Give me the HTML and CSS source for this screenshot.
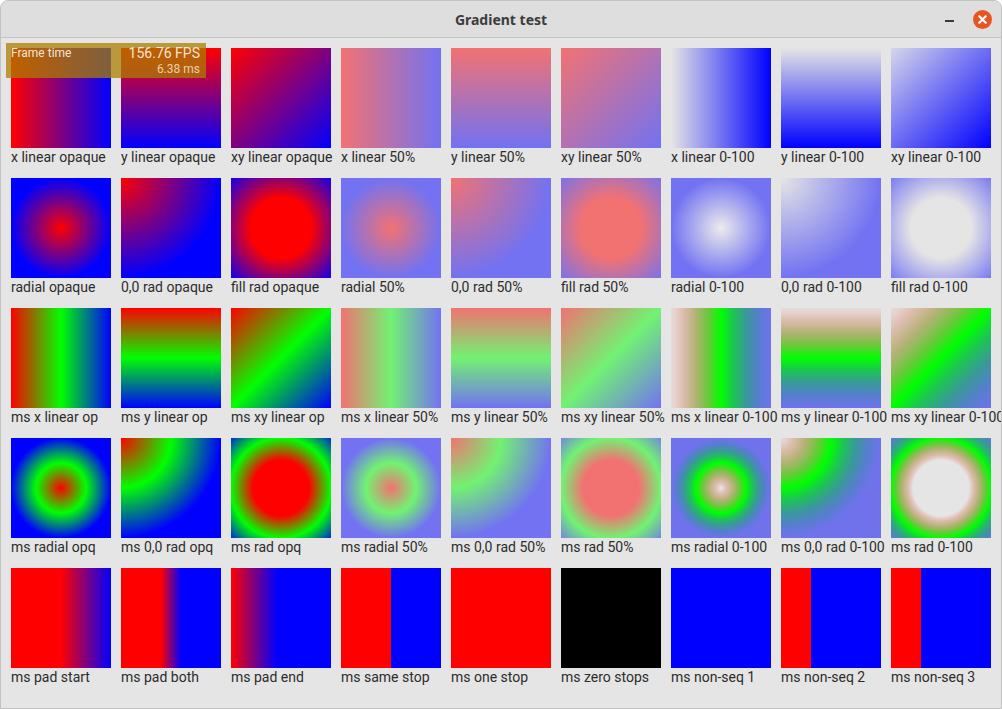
FILE: index.html
```html
<!DOCTYPE html>
<html lang="en">
  <head>
    <meta charset="UTF-8" />
    <meta name="viewport" content="width=device-width, initial-scale=1.0" />
    <title>Gradient test</title>
    <link rel="stylesheet" href="styles.css">
  </head>
  <body>
    <div class="window">
      <div class="titlebar">
        <span class="title">Gradient test</span>
        <div class="controls">
          <span class="minimize"></span>
          <span class="close">
            <svg width="19" height="19" viewBox="0 0 19 19">
              <circle cx="9.5" cy="9.5" r="9.5" fill="#e95420" />
              <path d="M6.3 6.3 L12.7 12.7 M12.7 6.3 L6.3 12.7" stroke="#fff" stroke-width="2.2" stroke-linecap="round" />
            </svg>
          </span>
        </div>
      </div>

      <div class="content">
        <div class="grid">
          <!-- row 1: linear -->
          <div class="cell"><div class="swatch xlin"></div><span class="label">x linear opaque</span></div>
          <div class="cell"><div class="swatch ylin"></div><span class="label">y linear opaque</span></div>
          <div class="cell"><div class="swatch xylin"></div><span class="label">xy linear opaque</span></div>
          <div class="cell"><div class="swatch xlin50"></div><span class="label">x linear 50%</span></div>
          <div class="cell"><div class="swatch ylin50"></div><span class="label">y linear 50%</span></div>
          <div class="cell"><div class="swatch xylin50"></div><span class="label">xy linear 50%</span></div>
          <div class="cell"><div class="swatch xlin0"></div><span class="label">x linear 0-100</span></div>
          <div class="cell"><div class="swatch ylin0"></div><span class="label">y linear 0-100</span></div>
          <div class="cell"><div class="swatch xylin0"></div><span class="label">xy linear 0-100</span></div>

          <!-- row 2: radial -->
          <div class="cell"><div class="swatch rad"></div><span class="label">radial opaque</span></div>
          <div class="cell"><div class="swatch rad00"></div><span class="label">0,0 rad opaque</span></div>
          <div class="cell"><div class="swatch radfill"></div><span class="label">fill rad opaque</span></div>
          <div class="cell"><div class="swatch rad50"></div><span class="label">radial 50%</span></div>
          <div class="cell"><div class="swatch rad0050"></div><span class="label">0,0 rad 50%</span></div>
          <div class="cell"><div class="swatch radfill50"></div><span class="label">fill rad 50%</span></div>
          <div class="cell"><div class="swatch rad0"></div><span class="label">radial 0-100</span></div>
          <div class="cell"><div class="swatch rad000"></div><span class="label">0,0 rad 0-100</span></div>
          <div class="cell"><div class="swatch radfill0"></div><span class="label">fill rad 0-100</span></div>

          <!-- row 3: multi stop linear -->
          <div class="cell"><div class="swatch msx"></div><span class="label">ms x linear op</span></div>
          <div class="cell"><div class="swatch msy"></div><span class="label">ms y linear op</span></div>
          <div class="cell"><div class="swatch msxy"></div><span class="label">ms xy linear op</span></div>
          <div class="cell"><div class="swatch msx50"></div><span class="label">ms x linear 50%</span></div>
          <div class="cell"><div class="swatch msy50"></div><span class="label">ms y linear 50%</span></div>
          <div class="cell"><div class="swatch msxy50"></div><span class="label">ms xy linear 50%</span></div>
          <div class="cell"><div class="swatch msx0"></div><span class="label">ms x linear 0-100</span></div>
          <div class="cell"><div class="swatch msy0"></div><span class="label">ms y linear 0-100</span></div>
          <div class="cell"><div class="swatch msxy0"></div><span class="label">ms xy linear 0-100</span></div>

          <!-- row 4: multi stop radial -->
          <div class="cell"><div class="swatch msrad"></div><span class="label">ms radial opq</span></div>
          <div class="cell"><div class="swatch msrad00"></div><span class="label">ms 0,0 rad opq</span></div>
          <div class="cell"><div class="swatch msradfill"></div><span class="label">ms rad opq</span></div>
          <div class="cell"><div class="swatch msrad50"></div><span class="label">ms radial 50%</span></div>
          <div class="cell"><div class="swatch msrad0050"></div><span class="label">ms 0,0 rad 50%</span></div>
          <div class="cell"><div class="swatch msradfill50"></div><span class="label">ms rad 50%</span></div>
          <div class="cell"><div class="swatch msrad0"></div><span class="label">ms radial 0-100</span></div>
          <div class="cell"><div class="swatch msrad000"></div><span class="label">ms 0,0 rad 0-100</span></div>
          <div class="cell"><div class="swatch msradfill0"></div><span class="label">ms rad 0-100</span></div>

          <!-- row 5: stop edge cases -->
          <div class="cell"><div class="swatch padstart"></div><span class="label">ms pad start</span></div>
          <div class="cell"><div class="swatch padboth"></div><span class="label">ms pad both</span></div>
          <div class="cell"><div class="swatch padend"></div><span class="label">ms pad end</span></div>
          <div class="cell"><div class="swatch samestop"></div><span class="label">ms same stop</span></div>
          <div class="cell"><div class="swatch onestop"></div><span class="label">ms one stop</span></div>
          <div class="cell"><div class="swatch zerostops"></div><span class="label">ms zero stops</span></div>
          <div class="cell"><div class="swatch nonseq1"></div><span class="label">ms non-seq 1</span></div>
          <div class="cell"><div class="swatch nonseq2"></div><span class="label">ms non-seq 2</span></div>
          <div class="cell"><div class="swatch nonseq3"></div><span class="label">ms non-seq 3</span></div>
        </div>

        <div class="fps">
          <span class="fps-title">Frame time</span>
          <div class="fps-values">
            <span class="fps-rate">156.76 FPS</span>
            <span class="fps-ms">6.38 ms</span>
          </div>
        </div>
      </div>
    </div>
  </body>
</html>
```

FILE: styles.css
```css
body {
  margin: 0;
  background: #fff;
}
.window {
  width: 1002px;
  height: 709px;
  box-sizing: border-box;
  border: 1px solid #c2c2c2;
  border-radius: 8px 8px 0 0;
  background: #e5e5e5;
  overflow: hidden;
  display: flex;
  flex-direction: column;
}
.titlebar {
  height: 36px;
  flex-shrink: 0;
  background: #dedede;
  border-bottom: 1px solid #c4c4c4;
  display: flex;
  align-items: center;
  justify-content: center;
  position: relative;
}
.title {
  font-family: "Noto Sans", sans-serif;
  font-weight: bold;
  font-size: 14px;
  color: #3c3c3c;
}
.controls {
  position: absolute;
  right: 9px;
  top: 9px;
  display: flex;
  align-items: center;
  gap: 19px;
}
.minimize {
  width: 9px;
  height: 2px;
  background: #3a3a3a;
  margin-top: 3px;
}
.close {
  display: flex;
}

.content {
  position: relative;
  flex: 1;
  padding: 10px;
}
.grid {
  display: grid;
  grid-template-columns: repeat(9, 100px);
  gap: 10px;
}
.cell {
  display: flex;
  flex-direction: column;
}
.swatch {
  width: 100px;
  height: 100px;
}
.label {
  height: 20px;
  line-height: 19px;
  font-family: Roboto, "Liberation Sans", sans-serif;
  font-size: 14px;
  color: #2c2c2c;
  white-space: nowrap;
}

/* fps overlay */
.fps {
  position: absolute;
  left: 5px;
  top: 5px;
  width: 200px;
  height: 35px;
  box-sizing: border-box;
  padding: 2px 6px 0 5px;
  background: rgba(170, 127, 0, 0.75);
  display: flex;
  justify-content: space-between;
  font-family: Roboto, sans-serif;
  color: rgba(255, 255, 255, 0.85);
}
.fps-title {
  font-size: 12px;
  line-height: 16px;
}
.fps-values {
  display: flex;
  flex-direction: column;
  align-items: flex-end;
}
.fps-rate {
  font-size: 14px;
  line-height: 17px;
}
.fps-ms {
  font-size: 12px;
  line-height: 15px;
  color: rgba(255, 235, 215, 0.8);
}

/* row 1 */
.xlin { background: linear-gradient(to right, #f00, #00f); }
.ylin { background: linear-gradient(to bottom, #f00, #00f); }
.xylin { background: linear-gradient(135deg, #f00, #00f); }
.xlin50 { background: linear-gradient(to right, #f27272, #7272f2); }
.ylin50 { background: linear-gradient(to bottom, #f27272, #7272f2); }
.xylin50 { background: linear-gradient(135deg, #f27272, #7272f2); }
.xlin0 { background: linear-gradient(to right, #e5e5e5, #00f); }
.ylin0 { background: linear-gradient(to bottom, #e5e5e5, #00f); }
.xylin0 { background: linear-gradient(135deg, #d6d6ea, #00f); }

/* row 2 */
.rad { background: radial-gradient(circle closest-side, #f00, #00f); }
.rad00 { background: radial-gradient(circle 100px at 0 0, #f00, #00f); }
.radfill { background: radial-gradient(circle 74px, #f00 30px, #00f); }
.rad50 { background: radial-gradient(circle closest-side, #f27272, #7272f2); }
.rad0050 { background: radial-gradient(circle 100px at 0 0, #f27272, #7272f2); }
.radfill50 { background: radial-gradient(circle 74px, #f27272 30px, #7272f2); }
.rad0 { background: radial-gradient(circle closest-side, #ececec, #7272f2); }
.rad000 { background: radial-gradient(circle 100px at 0 0, #e5e5e5, #7272f2); }
.radfill0 { background: radial-gradient(circle 74px, #e5e5e5 30px, #7272f2); }

/* row 3 */
.msx { background: linear-gradient(to right, #f00, #0f0, #00f); }
.msy { background: linear-gradient(to bottom, #f00, #0f0, #00f); }
.msxy { background: linear-gradient(135deg, #f00, #0f0, #00f); }
.msx50 { background: linear-gradient(to right, #f27272, #72f272, #7272f2); }
.msy50 { background: linear-gradient(to bottom, #f27272, #72f272, #7272f2); }
.msxy50 { background: linear-gradient(135deg, #f27272, #72f272, #7272f2); }
.msx0 {
  background: linear-gradient(to right, #e6dad8, #e5d1ce 5%, #dcbcac 12.5%, #b2b273 25%, #69c939 37.5%,
    #0f0 50%, #1dc454 62.5%, #399999 75%, #567ece 87.5%, #7072ec);
}
.msy0 {
  background: linear-gradient(to bottom, #e6dad8, #e5d1ce 5%, #dcbcac 12.5%, #b2b273 25%, #69c939 37.5%,
    #0f0 50%, #1dc454 62.5%, #399999 75%, #567ece 87.5%, #7072ec);
}
.msxy0 {
  background: linear-gradient(135deg, #e6dad8, #e5d1ce 5%, #dcbcac 12.5%, #b2b273 25%, #69c939 37.5%,
    #0f0 50%, #1dc454 62.5%, #399999 75%, #567ece 87.5%, #7072ec);
}

/* row 4 */
.msrad { background: radial-gradient(circle closest-side, #f00, #0f0, #00f); }
.msrad00 { background: radial-gradient(circle 100px at 0 0, #f00, #0f0, #00f); }
.msradfill { background: radial-gradient(circle 75px, #f00 28px, #0f0 50px, #00f); }
.msrad50 { background: radial-gradient(circle closest-side, #f27272, #72f272, #7272f2); }
.msrad0050 { background: radial-gradient(circle 100px at 0 0, #f27272, #72f272, #7272f2); }
.msradfill50 { background: radial-gradient(circle 75px, #f27272 28px, #72f272 50px, #7272f2); }
.msrad0 {
  background: radial-gradient(circle closest-side, #ececec, #e5d1ce 5%, #dcbcac 12.5%, #b2b273 25%, #69c939 37.5%,
    #0f0 50%, #1dc454 62.5%, #399999 75%, #567ece 87.5%, #7072ec);
}
.msrad000 {
  background: radial-gradient(circle 100px at 0 0, #e6dad8, #e5d1ce 5%, #dcbcac 12.5%, #b2b273 25%, #69c939 37.5%,
    #0f0 50%, #1dc454 62.5%, #399999 75%, #567ece 87.5%, #7072ec);
}
.msradfill0 {
  background: radial-gradient(circle 75px, #e5e5e5 28px, #e5d1ce 30px, #dcbcac 33px, #b2b273 39px, #69c939 44.5px,
    #0f0 50px, #1dc454 56px, #399999 62.5px, #567ece 69px, #7072ec 75px);
}

/* row 5 */
.padstart { background: linear-gradient(to right, #f00 50%, #00f); }
.padboth { background: linear-gradient(to right, #f00 40%, #00f 60%); }
.padend { background: linear-gradient(to right, #f00, #00f 46%); }
.samestop { background: linear-gradient(to right, #f00 50%, #00f 50%); }
.onestop { background: #f00; }
.zerostops { background: #000; }
.nonseq1 { background: #00f; }
.nonseq2 { background: linear-gradient(to right, #f00 30%, #00f 30%); }
.nonseq3 { background: linear-gradient(to right, #f00 30%, #00f 30%); }
```
